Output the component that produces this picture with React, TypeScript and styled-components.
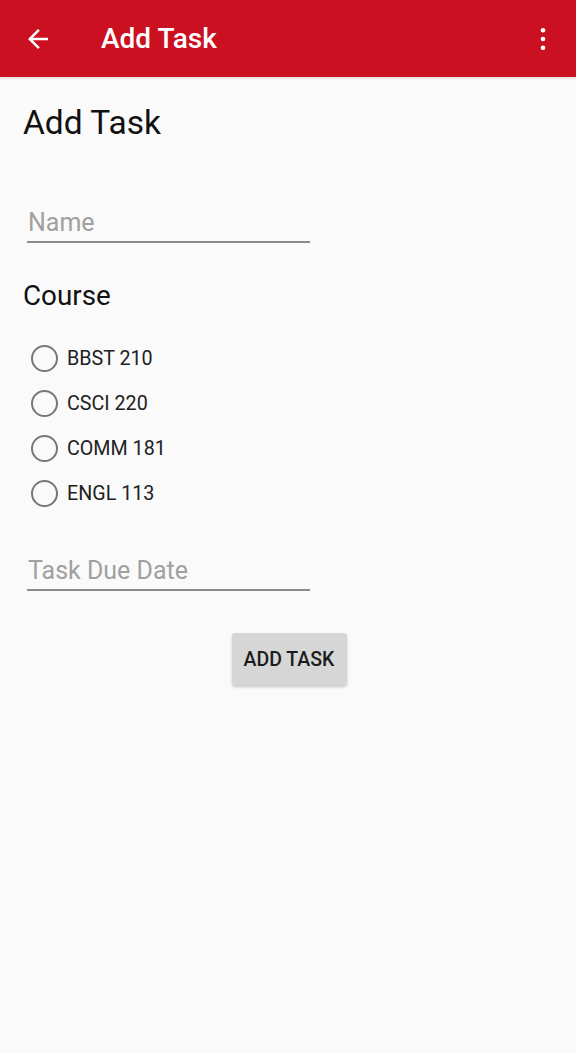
import React from "react";
import styled, { createGlobalStyle } from "styled-components";

const Global = createGlobalStyle`
  html, body { margin: 0; padding: 0; background: #fafafa; }
  body { font-family: Roboto, "Noto Sans", sans-serif; }
  * { box-sizing: border-box; }
`;

const Screen = styled.div`
  width: 576px;
  min-height: 1053px;
  background: #fafafa;
  display: flex;
  flex-direction: column;
`;

const AppBar = styled.header`
  height: 77px;
  background: #cb1022;
  display: flex;
  align-items: center;
  padding: 0 18px 0 23px;
  color: #fff;
  box-shadow: 0 1px 3px rgba(0,0,0,0.15);
`;

const IconButton = styled.div`
  width: 30px;
  height: 30px;
  display: flex;
  align-items: center;
  justify-content: center;
`;

const BarTitle = styled.h1`
  margin: 0 0 0 48px;
  font-size: 28px;
  font-weight: 500;
  flex: 1;
`;

const Content = styled.main`
  display: flex;
  flex-direction: column;
  padding: 0 23px;
`;

const Heading = styled.h2`
  margin: 25px 0 0 0;
  font-size: 33.5px;
  font-weight: 400;
  color: #111;
  line-height: 42px;
`;

const Field = styled.div<{ $top: number }>`
  margin: ${(p) => p.$top}px 0 0 4px;
  width: 283px;
  height: 40px;
  border-bottom: 2px solid #8c8c8c;
  display: flex;
  align-items: center;
  padding-left: 1px;
  font-size: 25px;
  color: #a0a0a0;
`;

const SubHeading = styled.h3`
  margin: 36px 0 0 0;
  font-size: 27.8px;
  font-weight: 400;
  color: #111;
  line-height: 34px;
`;

const RadioList = styled.div`
  display: flex;
  flex-direction: column;
  gap: 16px;
  margin-top: 31px;
  margin-left: 8px;
`;

const RadioRow = styled.label`
  display: flex;
  align-items: center;
  height: 29px;
  gap: 9px;
  font-size: 19.7px;
  color: #212121;
`;

const RadioCircle = styled.span`
  width: 27px;
  height: 27px;
  border-radius: 50%;
  border: 2.5px solid #777;
`;

const ButtonRow = styled.div`
  display: flex;
  justify-content: center;
  margin-top: 42px;
`;

const Button = styled.button`
  width: 115px;
  height: 52px;
  background: #d6d6d6;
  border: none;
  border-radius: 3px;
  font-family: Roboto, sans-serif;
  font-size: 19.5px;
  font-weight: 500;
  color: #1c1c1c;
  box-shadow: 0 2px 3px rgba(0,0,0,0.2);
  margin-left: 2px;
  padding: 0;
`;

const courses = ["BBST 210", "CSCI 220", "COMM 181", "ENGL 113"];

export default function App() {
  return (
    <>
      <Global />
      <Screen>
        <AppBar>
          <IconButton>
            <svg width="30" height="30" viewBox="0 0 24 24">
              <path d="M20 11H7.83l5.59-5.59L12 4l-8 8 8 8 1.41-1.41L7.83 13H20v-2z" fill="#fff" />
            </svg>
          </IconButton>
          <BarTitle>Add Task</BarTitle>
          <IconButton>
            <svg width="28" height="28" viewBox="0 0 24 24">
              <circle cx="12" cy="4.5" r="2" fill="#fff" />
              <circle cx="12" cy="12" r="2" fill="#fff" />
              <circle cx="12" cy="19.5" r="2" fill="#fff" />
            </svg>
          </IconButton>
        </AppBar>
        <Content>
          <Heading>Add Task</Heading>
          <Field $top={59}>Name</Field>
          <SubHeading>Course</SubHeading>
          <RadioList>
            {courses.map((c) => (
              <RadioRow key={c}>
                <RadioCircle />
                {c}
              </RadioRow>
            ))}
          </RadioList>
          <Field $top={43}>Task Due Date</Field>
          <ButtonRow>
            <Button>ADD TASK</Button>
          </ButtonRow>
        </Content>
      </Screen>
    </>
  );
}
